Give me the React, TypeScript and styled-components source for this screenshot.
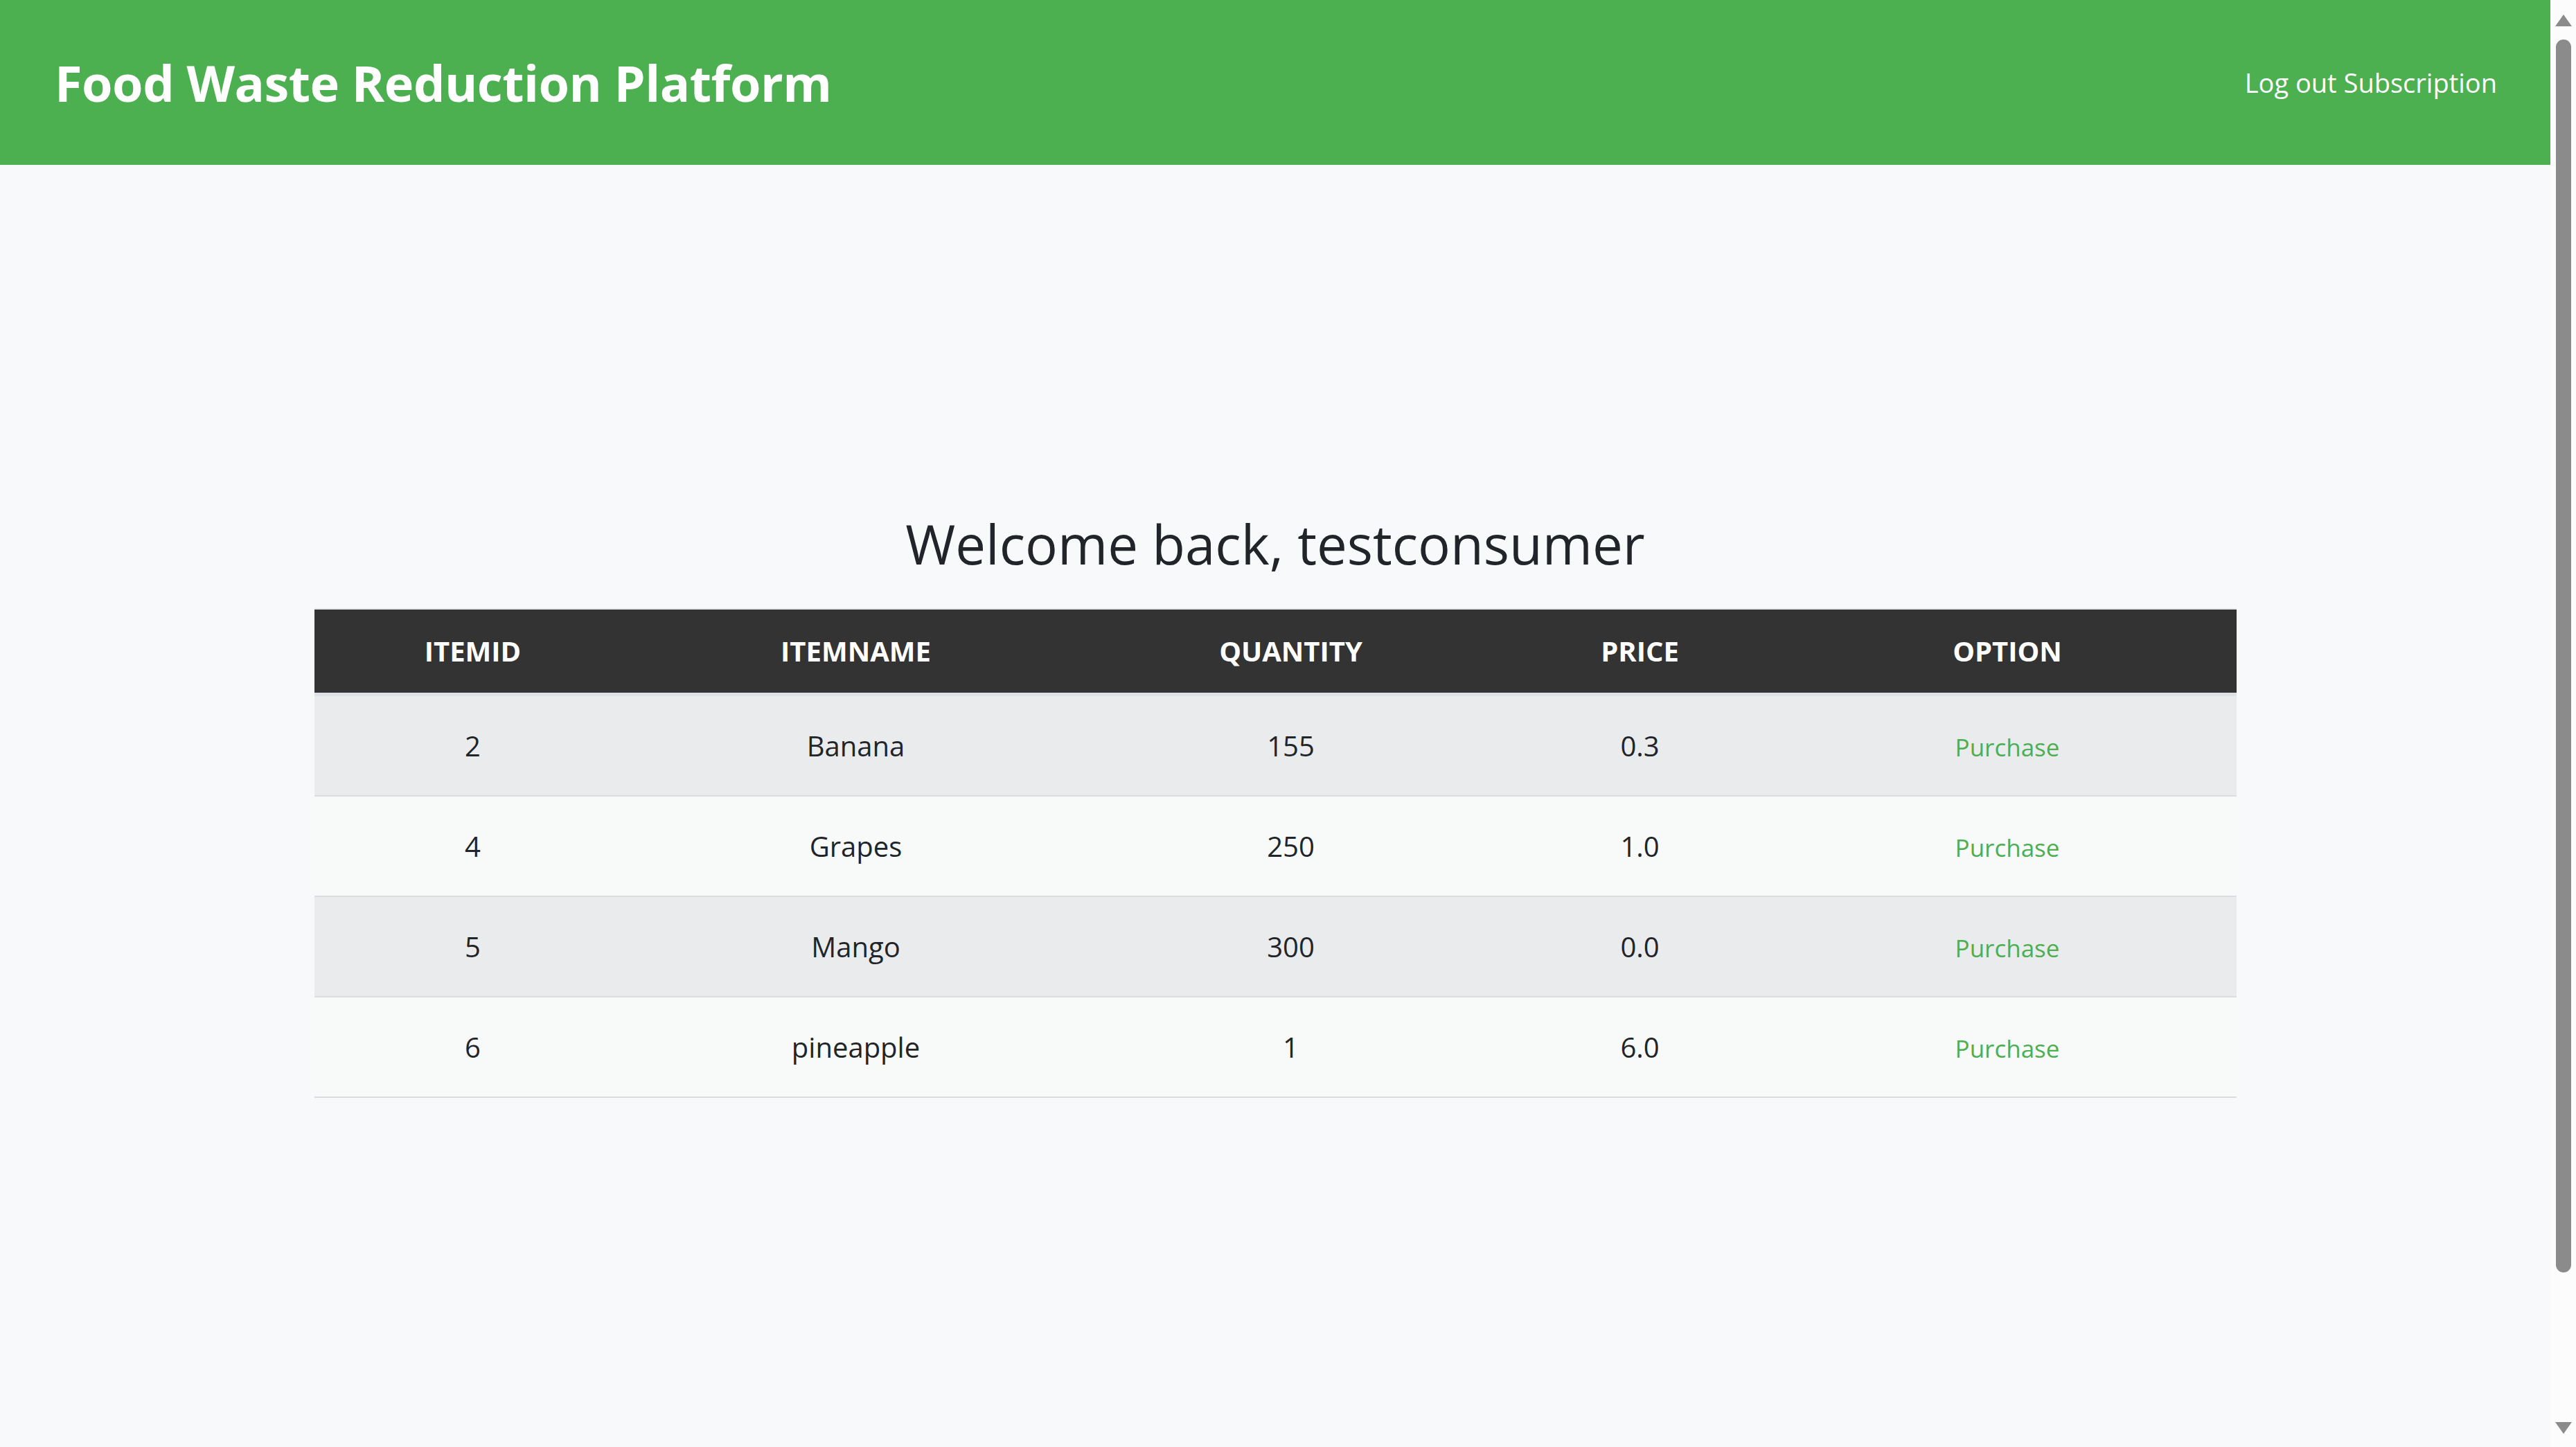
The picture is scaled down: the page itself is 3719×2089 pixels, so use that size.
import React from "react";
import styled, { createGlobalStyle } from "styled-components";

const GlobalStyle = createGlobalStyle`
  html, body {
    margin: 0;
    padding: 0;
    background: #f8f9fa;
    font-family: "Open Sans", "Noto Sans", sans-serif;
    color: #212529;
  }
`;

const Page = styled.div`
  height: 100vh;
  display: flex;
  overflow: hidden;
`;

const Content = styled.div`
  flex: 1;
  min-width: 0;
  display: flex;
  flex-direction: column;
`;

const Header = styled.header`
  height: 238px;
  flex-shrink: 0;
  background: #4caf50;
  display: flex;
  align-items: center;
  justify-content: space-between;
  padding: 0 77px 0 79px;
  box-sizing: border-box;
`;

const Brand = styled.h1`
  margin: 0;
  color: #ffffff;
  font-size: 72px;
  font-weight: 700;
  letter-spacing: -0.5px;
`;

const Nav = styled.nav`
  display: flex;
  gap: 10px;
`;

const NavLink = styled.a`
  color: #ffffff;
  font-size: 38px;
  text-decoration: none;
`;

const Main = styled.main`
  flex: 1;
  display: flex;
  flex-direction: column;
  align-items: center;
  padding-top: 501px;
`;

const Welcome = styled.h2`
  margin: 0 0 45px;
  font-size: 78px;
  font-weight: 500;
  line-height: 1.2;
  color: #212529;
`;

const Table = styled.table`
  width: 2775px;
  table-layout: fixed;
  border-collapse: separate;
  border-spacing: 0;
  border-top: 2px solid #e3e5e8;
`;

const HeadCell = styled.th`
  height: 120px;
  padding: 0;
  background: #333333;
  color: #ffffff;
  font-size: 40px;
  font-weight: 700;
  text-transform: uppercase;
  text-align: center;
  vertical-align: middle;
  border-bottom: 5px solid #dee2e6;
`;

const Row = styled.tr<{ $striped: boolean }>`
  background: ${(p) => (p.$striped ? "#eaebed" : "#f8f9f9")};
`;

const Cell = styled.td`
  height: 143px;
  padding: 0;
  font-size: 40px;
  text-align: center;
  vertical-align: middle;
  color: #212529;
  border-bottom: 2px solid #dcdddf;
`;

const PurchaseLink = styled.a`
  color: #4caf50;
  font-size: 35px;
  text-decoration: none;
  cursor: pointer;
`;

const ScrollTrack = styled.aside`
  width: 37px;
  flex-shrink: 0;
  background: #fcfcfc;
  display: flex;
  flex-direction: column;
  align-items: center;
  padding: 21px 0 19px;
  box-sizing: border-box;
`;

const Arrow = styled.div<{ $dir: "up" | "down" }>`
  width: 0;
  height: 0;
  border-left: 12px solid transparent;
  border-right: 12px solid transparent;
  ${(p) =>
    p.$dir === "up"
      ? "border-bottom: 17px solid #8b8b8b;"
      : "border-top: 17px solid #8b8b8b;"}
`;

const Thumb = styled.div`
  width: 22px;
  height: 1780px;
  margin-top: 19px;
  border-radius: 11px;
  background: #8b8b8b;
`;

const Spacer = styled.div`
  flex: 1;
`;

const columns = [
  { label: "ItemID", width: 458 },
  { label: "ItemName", width: 648 },
  { label: "Quantity", width: 608 },
  { label: "Price", width: 400 },
  { label: "Option", width: 661 },
];

const items = [
  { id: 2, name: "Banana", qty: 155, price: "0.3" },
  { id: 4, name: "Grapes", qty: 250, price: "1.0" },
  { id: 5, name: "Mango", qty: 300, price: "0.0" },
  { id: 6, name: "pineapple", qty: 1, price: "6.0" },
];

export default function App() {
  return (
    <>
      <GlobalStyle />
      <Page>
        <Content>
          <Header>
            <Brand>Food Waste Reduction Platform</Brand>
            <Nav>
              <NavLink href="#">Log out</NavLink>
              <NavLink href="#">Subscription</NavLink>
            </Nav>
          </Header>
          <Main>
            <Welcome>Welcome back, testconsumer</Welcome>
            <Table>
              <colgroup>
                {columns.map((c) => (
                  <col key={c.label} style={{ width: c.width }} />
                ))}
              </colgroup>
              <thead>
                <tr>
                  {columns.map((c) => (
                    <HeadCell key={c.label}>{c.label}</HeadCell>
                  ))}
                </tr>
              </thead>
              <tbody>
                {items.map((it, i) => (
                  <Row key={it.id} $striped={i % 2 === 0}>
                    <Cell>{it.id}</Cell>
                    <Cell>{it.name}</Cell>
                    <Cell>{it.qty}</Cell>
                    <Cell>{it.price}</Cell>
                    <Cell>
                      <PurchaseLink>Purchase</PurchaseLink>
                    </Cell>
                  </Row>
                ))}
              </tbody>
            </Table>
          </Main>
        </Content>
        <ScrollTrack aria-hidden="true">
          <Arrow $dir="up" />
          <Thumb />
          <Spacer />
          <Arrow $dir="down" />
        </ScrollTrack>
      </Page>
    </>
  );
}
